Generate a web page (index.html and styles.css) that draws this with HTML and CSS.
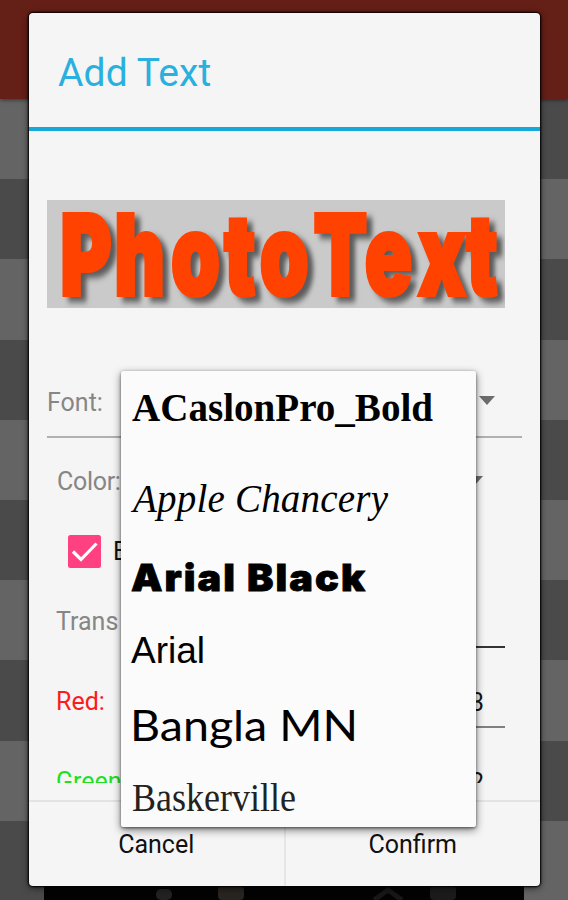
FILE: index.html
```html
<!DOCTYPE html>
<html lang="en">
<head>
  <meta charset="UTF-8" />
  <meta name="viewport" content="width=device-width, initial-scale=1.0" />
  <title>Add Text</title>
  <link rel="stylesheet" href="styles.css">
</head>
<body>
  <div class="appbar"></div>
  <div class="toolbar">
    <svg width="480" height="14" viewBox="0 0 480 14">
      <rect x="112" y="3" width="16" height="11" rx="5" fill="#222" />
      <rect x="174" y="0" width="26" height="14" rx="4" fill="#282420" />
      <path d="M330 14l14-10 14 10" fill="none" stroke="#171717" stroke-width="5" />
      <rect x="386" y="0" width="26" height="14" rx="4" fill="#1b1b1b" />
    </svg>
  </div>

  <div class="dialog">
    <h2 class="title">Add Text</h2>

    <div class="content">
      <svg class="preview" width="458" height="108" viewBox="0 0 458 108">
        <g transform="scale(0.7 1)">
          <text class="logo" y="95" x="19 96 177 253 304 380.6 454 530 599">PhotoText</text>
        </g>
      </svg>

      <div class="row font-row">
        <label>Font:</label>
        <span class="arrow"></span>
      </div>

      <div class="row color-row">
        <label>Color:</label>
        <span class="arrow"></span>
      </div>

      <div class="row check-row">
        <svg class="checkbox" width="33" height="33" viewBox="0 0 33 33">
          <rect width="33" height="33" rx="2.5" fill="#ff4081" />
          <path d="M5 16.500l8 8L28.500 8.500" fill="none" stroke="#fff" stroke-width="3.200" />
        </svg>
        <span>E</span>
      </div>

      <div class="row value-row trans">
        <label>Trans</label>
        <span class="field"></span>
      </div>
      <div class="row value-row red">
        <label>Red:</label>
        <span class="field">3</span>
      </div>
      <div class="row value-row green">
        <label>Green</label>
        <span class="field">2</span>
      </div>
    </div>

    <div class="buttons">
      <button>Cancel</button>
      <button>Confirm</button>
    </div>
  </div>

  <div class="dropdown">
    <svg width="355" height="80"><text class="caslon" x="11" y="50" textLength="301" lengthAdjust="spacingAndGlyphs">ACaslonPro_Bold</text></svg>
    <svg width="355" height="95"><text class="chancery" x="12" y="61" textLength="255" lengthAdjust="spacing">Apple Chancery</text></svg>
    <svg width="355" height="70"><text class="black" x="10" y="45" textLength="236" lengthAdjust="spacingAndGlyphs">Arial Black</text></svg>
    <svg width="355" height="70"><text class="arial" x="10" y="47">Arial</text></svg>
    <svg width="355" height="80"><text class="bangla" x="9" y="55" textLength="228" lengthAdjust="spacingAndGlyphs">Bangla MN</text></svg>
    <svg width="355" height="61"><text class="baskerville" x="11" y="45" textLength="164" lengthAdjust="spacingAndGlyphs">Baskerville</text></svg>
  </div>
</body>
</html>
```

FILE: styles.css
```css
* { box-sizing: border-box; }
body {
  margin: 0;
  height: 900px;
  position: relative;
  overflow: hidden;
  font-family: Roboto, sans-serif;
  font-size: 25px;
  background:
    repeating-linear-gradient(#646464 0 80.2px, #4a4a4a 80.2px 160.4px) 0 99px / 284px 801px no-repeat,
    repeating-linear-gradient(#4a4a4a 0 80.2px, #646464 80.2px 160.4px) 284px 99px / 284px 801px no-repeat;
}
.appbar { height: 99px; background: #641f17; box-shadow: 0 1px 4px rgba(0,0,0,0.5); }
.toolbar { position: absolute; left: 44px; bottom: 0; width: 480px; height: 14px; background: #030303; }
.toolbar svg { display: block; }

.dialog {
  position: absolute;
  left: 29px;
  top: 13px;
  width: 511px;
  height: 873px;
  display: flex;
  flex-direction: column;
  background: #f5f5f5;
  border-radius: 4px;
  box-shadow: 0 0 2px 1px #000, 0 2px 7px rgba(0,0,0,0.6);
}
.title {
  margin: 0;
  height: 118px;
  padding-left: 29px;
  border-bottom: 4px solid #14a9d8;
  color: #29b0de;
  font-size: 39px;
  font-weight: 400;
  line-height: 120px;
  letter-spacing: 0.1px;
}
.content { height: 652px; overflow: hidden; padding: 69px 18px 0; }
.preview { display: block; background: #cacaca; }
.logo {
  font-family: Inter, sans-serif;
  font-size: 112px;
  font-weight: 900;
  fill: #ff4200;
  stroke: #ff4200;
  stroke-width: 4px;
  filter: drop-shadow(8px 5px 3px rgba(0,0,0,0.55));
}

.row { display: flex; align-items: center; color: #868686; }
.font-row { margin-top: 60px; height: 70px; border-bottom: 2px solid #b0b0b0; padding-right: 27px; justify-content: space-between; }
.arrow { border: 8px solid transparent; border-top: 9px solid #6c6c6c; border-bottom: 0; }
.font-row .arrow { margin-bottom: 3px; }
.color-row { height: 87px; padding: 0 39px 0 10px; justify-content: space-between; }
.color-row label { letter-spacing: -0.3px; }
.color-row .arrow { margin-bottom: 3px; }
.check-row { height: 53px; padding-left: 21px; gap: 12px; color: #111; }
.value-row { height: 80px; padding: 0 17px 0 9px; justify-content: space-between; }
.value-row.trans { margin-top: 3px; }
.field {
  width: 200px;
  height: 50px;
  margin-top: 3px;
  padding-right: 21px;
  border-bottom: 2px solid #808080;
  color: #151515;
  text-align: right;
  line-height: 50px;
}
.trans .field { border-color: #333; }
.red label { color: #fb1c1c; }
.green label { color: #1ee01e; }

.buttons { display: flex; margin-top: 17px; height: 86px; border-top: 2px solid #e3e3e3; }
.buttons button {
  flex: 1;
  padding: 0;
  border: 0;
  background: none;
  color: #111;
  font: 25px Roboto, sans-serif;
}
.buttons button + button { border-left: 2px solid #e6e6e6; }

.dropdown {
  position: absolute;
  left: 121px;
  top: 371px;
  width: 355px;
  height: 456px;
  background: #fbfbfb;
  border-radius: 2px;
  box-shadow: 0 3px 8px rgba(0,0,0,0.5), 0 1px 3px rgba(0,0,0,0.5);
}
.dropdown svg { display: block; }
.caslon { font: bold 40px "Liberation Serif", serif; }
.chancery { font: italic 39px "Liberation Serif", serif; }
.black { font: 900 37px Inter, sans-serif; letter-spacing: 1.9px; stroke: #000; stroke-width: 0.8px; }
.arial { font: 37px "Liberation Sans", sans-serif; }
.bangla { font: 43px Lato, sans-serif; }
.baskerville { font: 39px "Liberation Serif", serif; fill: #222; }
```
